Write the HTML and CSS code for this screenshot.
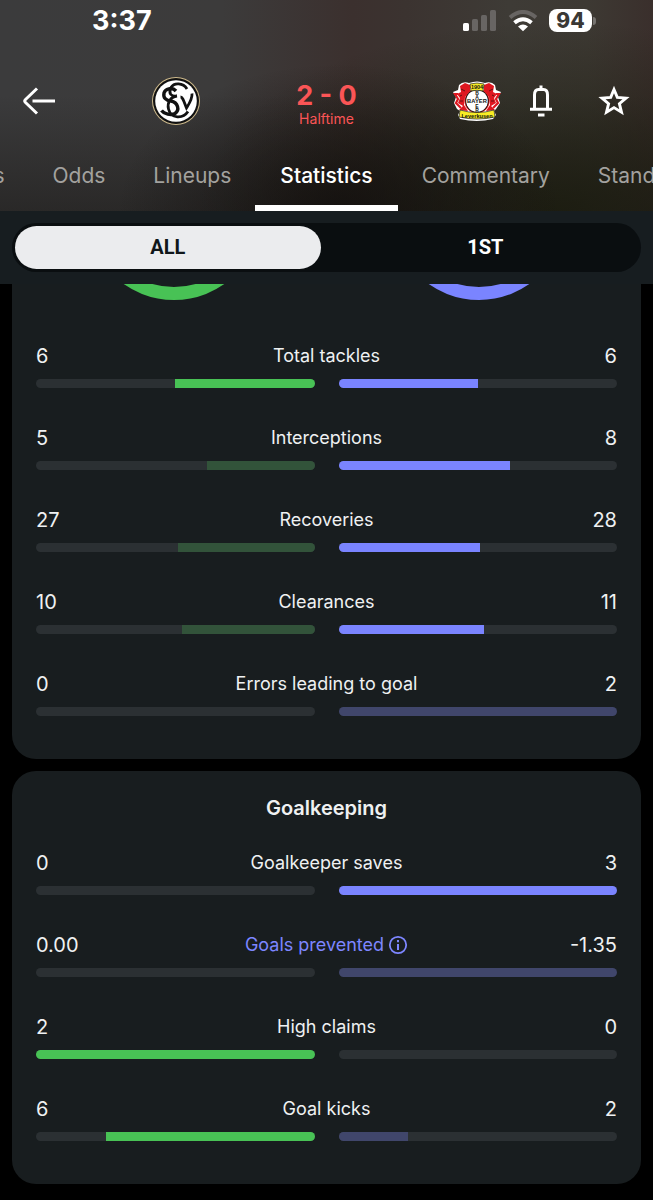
FILE: index.html
```html
<!DOCTYPE html>
<html lang="en">
<head>
<meta charset="utf-8">
<meta name="viewport" content="width=device-width, initial-scale=1">
<title>Match statistics</title>
<link rel="stylesheet" href="styles.css">
</head>
<body>
<header class="header">
  <div class="status">
    <time class="clock">3:37</time>
    <div class="status-icons">
      <svg width="34" height="22" viewBox="0 0 34 22" aria-hidden="true"><rect x="0" y="13" width="6" height="8" rx="1.6" fill="#fff"/><g fill="#686563"><rect x="9" y="9" width="6" height="12" rx="1.6"/><rect x="18" y="5" width="6" height="16" rx="1.6"/><rect x="27" y="0" width="6" height="21" rx="1.6"/></g></svg>
      <svg width="30" height="22" viewBox="0 0 30 22" aria-hidden="true"><path d="M2 7.5Q15 -3.5 28 7.5" fill="none" stroke="#686563" stroke-width="4"/><path d="M6.5 12.7Q15 5.7 23.500 12.700" fill="none" stroke="#fff" stroke-width="4"/><path d="M10 16.500Q15 12.300 20 16.500L15 21.300Z" fill="#fff"/></svg>
      <div class="battery"><span class="battery-level">94</span><span class="battery-cap"></span></div>
    </div>
  </div>
  <div class="match">
    <button class="icon-button" aria-label="Back"><svg width="34" height="30" viewBox="0 0 34 30"><path d="M14 2.500L2.500 13.500Q1 15 2.500 16.500L14 27.500M9.500 15H32" fill="none" stroke="#fff" stroke-width="3"/></svg></button>
    <div class="teams">
      <svg class="crest" viewBox="0 0 48 48" role="img" aria-label="Home team">
        <circle cx="24" cy="24" r="24" fill="#cdb98c"/><circle cx="24" cy="24" r="23" fill="#111"/><circle cx="24" cy="24" r="20.800" fill="#fff"/>
        <g fill="none" stroke="#111" stroke-width="2.800">
          <path d="M35 12C31 5.500 22 5.500 19 10.500"/>
          <path d="M24 14C20 9.500 13 12 12 16C11 21 14 23.500 19 24C26 25.500 28 33 23 36.500C19 38.500 12 37 9.500 33.500" stroke-width="3.400"/>
          <path d="M19 11C16 16 19 20 25 19C18 20 15 26 16.500 32C19 42 31 42 36 34.500"/>
          <path d="M28.500 20C31 20 32 25 34.500 31C37 27 40.500 22 40 16.500"/>
        </g>
      </svg>
      <div class="score"><strong class="score-value">2 - 0</strong><span class="score-phase">Halftime</span></div>
      <svg class="crest" viewBox="0 0 48 48" role="img" aria-label="Bayer Leverkusen">
        <path d="M16 6Q24 3 32 6Q38 4 42 8L43 13L48 15L45 20L47 26L43 32L41 34L43 38L40 42Q24 46 7 42L5 38L7 34L4 32L1 26L3 20L0 15L5 13L6 8Q10 4 16 6Z" fill="#fff"/>
        <g fill="#df1720"><path d="M7 9L12 6L17 8V14L12 20L11 28L15 34L6 33L10 29L5 26L7 21L4 17L8 15Z"/><path d="M41 9L36 6L31 8V14L36 20L37 28L33 34L42 33L38 29L43 26L41 21L44 17L40 15Z"/></g>
        <path d="M5 17L2 17L5 22L3 26L8 31M43 17L46 17L43 22L45 26L40 31" fill="none" stroke="#df1720" stroke-width="2.200"/>
        <path d="M8 12L12 14M9 18L7 19M40 12L36 14M39 18L41 19M10 24L7 24M38 24L41 24" stroke="#611" stroke-width="1"/>
        <circle cx="24" cy="24" r="12.500" fill="#e6201f"/><circle cx="24" cy="24" r="11.700" fill="#111"/><circle cx="24" cy="24" r="10.800" fill="#fff"/>
        <path d="M17 7Q24 5 31 7L30 14Q24 12.500 18 14Z" fill="#f8ed25" stroke="#222" stroke-width=".7"/>
        <path d="M7 33Q24 38 41 33L42 40Q24 44 6 40Z" fill="#f8ed25" stroke="#222" stroke-width=".7"/>
        <g class="crest-text"><text x="24" y="12.300" font-size="5.500">1904</text><text x="24" y="26.200" font-size="5.800">BAYER</text><text x="24" y="18" font-size="5">B</text><text x="24" y="22" font-size="5">A</text><text x="24" y="30.500" font-size="5">E</text><text x="24" y="34.500" font-size="5">R</text><text x="24" y="40.600" font-size="5.600">Leverkusen</text></g>
      </svg>
    </div>
    <div class="actions">
      <button class="icon-button" aria-label="Notifications"><svg width="24" height="32" viewBox="0 0 24 32"><path d="M5.500 23.500V10Q5.500 4.500 9.500 4.500H14.500Q18.500 4.500 18.500 10V23.500M1 24.200H23M12 0.500V4" fill="none" stroke="#fff" stroke-width="3"/><path d="M9 28.500H15.500V31.500H9Z" fill="#fff"/></svg></button>
      <button class="icon-button" aria-label="Favourite"><svg width="32" height="32" viewBox="0 0 32 32"><path d="M16 4.500L19.300 12.400L28 13.100L21.400 18.700L23.500 27.200L16 22.600L8.500 27.200L10.600 18.700L4 13.100L12.700 12.400Z" fill="none" stroke="#fff" stroke-width="2.900"/></svg></button>
    </div>
  </div>
  <nav class="tabs" aria-label="Match sections">
    <div class="tab-group tab-group-before"><a class="tab" href="#details">Details</a><a class="tab" href="#odds">Odds</a><a class="tab" href="#lineups">Lineups</a></div>
    <a class="tab tab-active" href="#statistics" aria-current="page">Statistics</a>
    <div class="tab-group"><a class="tab" href="#commentary">Commentary</a><a class="tab" href="#standings">Standings</a></div>
  </nav>
</header>
<div class="filter">
  <div class="segments"><button class="segment segment-active" aria-pressed="true">ALL</button><button class="segment" aria-pressed="false">1ST</button></div>
</div>
<main class="content" id="statistics">
  <section class="card card-continued" aria-label="Defending">
    <div class="rings" aria-hidden="true">
      <svg class="ring" viewBox="0 70 172 16"><circle cx="86" cy="-1" r="80.500" fill="none" stroke="#48c255" stroke-width="13"/></svg>
      <svg class="ring" viewBox="0 70 172 16"><circle cx="86" cy="-1" r="80.500" fill="none" stroke="#7a84ff" stroke-width="13"/></svg>
    </div>
    <ul class="stats">
      <li class="stat"><span class="value">6</span><span class="label">Total tackles</span><span class="value value-away">6</span><div class="track track-home"><div class="fill home" style="width:50%"></div></div><div class="track"><div class="fill away" style="width:50%"></div></div></li>
      <li class="stat"><span class="value">5</span><span class="label">Interceptions</span><span class="value value-away">8</span><div class="track track-home"><div class="fill home-dim" style="width:38.5%"></div></div><div class="track"><div class="fill away" style="width:61.5%"></div></div></li>
      <li class="stat"><span class="value">27</span><span class="label">Recoveries</span><span class="value value-away">28</span><div class="track track-home"><div class="fill home-dim" style="width:49.1%"></div></div><div class="track"><div class="fill away" style="width:50.9%"></div></div></li>
      <li class="stat"><span class="value">10</span><span class="label">Clearances</span><span class="value value-away">11</span><div class="track track-home"><div class="fill home-dim" style="width:47.6%"></div></div><div class="track"><div class="fill away" style="width:52.4%"></div></div></li>
      <li class="stat"><span class="value">0</span><span class="label">Errors leading to goal</span><span class="value value-away">2</span><div class="track track-home"></div><div class="track"><div class="fill away-dim" style="width:100%"></div></div></li>
    </ul>
  </section>
  <section class="card">
    <h2 class="card-title">Goalkeeping</h2>
    <ul class="stats">
      <li class="stat"><span class="value">0</span><span class="label">Goalkeeper saves</span><span class="value value-away">3</span><div class="track track-home"></div><div class="track"><div class="fill away" style="width:100%"></div></div></li>
      <li class="stat"><span class="value">0.00</span><button class="label label-info">Goals prevented <svg width="20" height="20" viewBox="0 0 20 20" aria-hidden="true"><circle cx="10" cy="10" r="8.200" fill="none" stroke="currentColor" stroke-width="1.800"/><path d="M9 5H11V7.200H9ZM9 9H11V15H9Z" fill="currentColor"/></svg></button><span class="value value-away">-1.35</span><div class="track track-home"></div><div class="track"><div class="fill away-dim" style="width:100%"></div></div></li>
      <li class="stat"><span class="value">2</span><span class="label">High claims</span><span class="value value-away">0</span><div class="track track-home"><div class="fill home" style="width:100%"></div></div><div class="track"></div></li>
      <li class="stat"><span class="value">6</span><span class="label">Goal kicks</span><span class="value value-away">2</span><div class="track track-home"><div class="fill home" style="width:75%"></div></div><div class="track"><div class="fill away-dim" style="width:25%"></div></div></li>
    </ul>
  </section>
</main>
</body>
</html>
```
FILE: styles.css
```css
* { box-sizing: border-box; }
body { margin: 0; background: #000; color: #eff1f2; font-family: Inter, "Liberation Sans", sans-serif; }
button { border: 0; padding: 0; background: none; color: inherit; font: inherit; cursor: pointer; }
svg { display: block; flex: none; }

.header {
  background:
    radial-gradient(ellipse 34% 70% at 52% 100%, rgba(16, 13, 12, .75), transparent),
    radial-gradient(ellipse 55% 90% at 85% 100%, rgba(26, 27, 14, .85), transparent),
    linear-gradient(to bottom, transparent 45%, rgba(24, 22, 20, .5) 100%),
    linear-gradient(to right, #3b3b3c 0, #3c3b3b 34%, #3b302e 54%, #3b3330 62%, #3e3b36 78%, #3d3933 90%, #3a2f2c 100%);
}
.status { display: flex; justify-content: space-between; align-items: center; height: 40px; padding: 1px 57px 0 92px; }
.clock { color: #fff; font-size: 27px; font-weight: 700; line-height: 28px; }
.status-icons { display: flex; align-items: center; gap: 11px; }
.battery { display: flex; align-items: center; gap: 1px; }
.battery-level { width: 43px; border-radius: 8px; background: #fff; color: #3a3835; font-size: 21px; font-weight: 800; line-height: 23px; text-align: center; }
.battery-cap { width: 3px; height: 8px; border-radius: 0 4px 4px 0; background: #767370; }

.match { display: grid; grid-template-columns: minmax(0, 1fr) auto minmax(0, 1fr); align-items: center; padding: 34px 23px 7px; }
.icon-button { flex: none; justify-self: start; }
.teams { display: flex; align-items: center; gap: 15vw; }
.crest { width: 48px; height: 48px; }
.crest-text { fill: #111; font-family: "Liberation Sans", sans-serif; font-weight: 700; text-anchor: middle; }
.score { display: flex; flex-direction: column; align-items: center; width: 58px; padding-top: 8px; color: #fb5556; white-space: nowrap; }
.score-value { font-size: 27px; line-height: 28px; }
.score-phase { font-size: 14px; line-height: 18px; }
.actions { display: flex; align-items: center; justify-content: flex-end; gap: 45px; }

.tabs { display: grid; grid-template-columns: minmax(0, 1fr) auto minmax(0, 1fr); height: 76px; }
.tab-group { display: flex; overflow: hidden; }
.tab-group-before { justify-content: flex-end; }
.tab { flex: none; padding: 28px 24px 0; border-bottom: 6px solid transparent; color: #a3a29f; font-size: 21px; line-height: 26px; text-decoration: none; }
.tab-active { padding: 28px 25px 0; border-color: #fff; color: #fff; font-weight: 500; }

.filter { padding: 12px; background: #171d20; }
.segments { display: flex; gap: 12px; padding: 3px; border-radius: 25px; background: #0a0e10; }
.segment { flex: 1 0 0; border-radius: 22px; color: #fff; font-family: Roboto, sans-serif; font-size: 20px; font-weight: 700; line-height: 43px; }
.segment-active { background: #ebecee; color: #10171a; }

.content { display: flex; flex-direction: column; gap: 12px; padding: 0 12px 16px; }
.card { padding: 23px 24px 43px; border-radius: 24px; background: #181d1f; }
.card-continued { padding-top: 0; border-radius: 0 0 24px 24px; }
.card-title { margin: 0 0 29px; font-size: 20px; font-weight: 600; line-height: 28px; text-align: center; }
.rings { display: grid; grid-template-columns: 1fr 1fr; gap: 30px; margin-bottom: 44px; justify-items: center; }
.ring { width: 172px; height: 16px; }
.stats { display: flex; flex-direction: column; gap: 38px; margin: 0; padding: 0; list-style: none; }
.stat { display: grid; grid-template-columns: repeat(12, minmax(0, 1fr)); row-gap: 11px; }
.value { grid-column: span 3; font-size: 20px; line-height: 24px; }
.value-away { text-align: right; }
.label { grid-column: span 6; font-size: 18px; line-height: 24px; text-align: center; }
.label-info { display: flex; align-items: center; justify-content: center; gap: 4px; color: #7d86ff; }
.track { display: flex; grid-column: span 6; height: 9px; margin-left: 12px; border-radius: 5px; background: #2b3033; overflow: hidden; }
.track-home { justify-content: flex-end; margin: 0 12px 0 0; }
.home { background: #48c255; }
.home-dim { background: #32533a; }
.away { background: #7a84ff; }
.away-dim { background: #40466b; }
```
